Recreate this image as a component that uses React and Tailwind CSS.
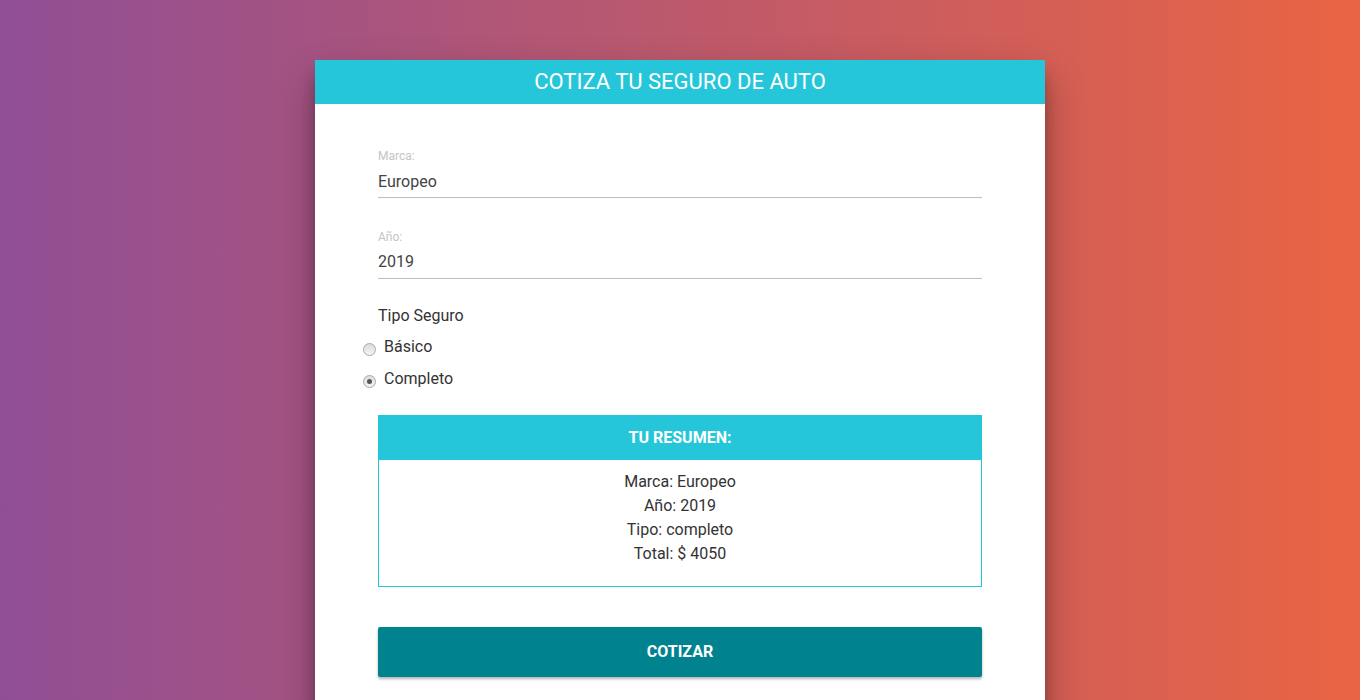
import { useState } from 'react'

export default function App() {
  const [marca] = useState('Europeo')
  const [year] = useState('2019')
  const [plan, setPlan] = useState('completo')

  return (
    <main className="min-h-screen h-[700px] overflow-hidden bg-[linear-gradient(to_right,#904e95,#e96443)] font-['Roboto',sans-serif]">
      <div className="pt-[60px]">
        <div className="mx-auto w-[730px] h-[700px] bg-white shadow-[0_19px_38px_rgba(0,0,0,0.30),0_15px_12px_rgba(0,0,0,0.22)]">
          {/* Header */}
          <header className="h-[44px] bg-[#26c6da] flex items-center justify-center">
            <h1 className="text-[22px] text-white uppercase leading-none">Cotiza tu seguro de auto</h1>
          </header>

          {/* Form */}
          <div className="px-[63px] pt-[44px]">
            <div>
              <label className="block h-4 text-[12px] leading-4 text-[#c4c4c4]">Marca:</label>
              <div className="mt-[2px] h-[32px] flex items-center border-b border-[#bdbdbd] text-[16px] text-[#444]">
                {marca}
              </div>
            </div>

            <div className="mt-[31px]">
              <label className="block h-4 text-[12px] leading-4 text-[#c4c4c4]">Año:</label>
              <div className="mt-[1px] h-[33px] flex items-center border-b border-[#bdbdbd] text-[16px] text-[#444]">
                {year}
              </div>
            </div>

            <p className="mt-[25px] text-[16px] leading-6 text-[#333]">Tipo Seguro</p>

            <div className="mt-[3px]">
              {[
                { value: 'basico', label: 'Básico' },
                { value: 'completo', label: 'Completo' },
              ].map((opt) => (
                <label
                  key={opt.value}
                  onClick={() => setPlan(opt.value)}
                  className="-ml-[15px] h-8 flex items-center gap-[8px] cursor-pointer text-[16px] text-[#333]"
                >
                  <span className="w-[13px] h-[13px] rounded-full border border-[#a9a9a9] bg-[linear-gradient(#dcdcdc,#f4f4f4)] flex items-center justify-center mt-[4px]">
                    {plan === opt.value && <span className="w-[5px] h-[5px] rounded-full bg-[#555]" />}
                  </span>
                  {opt.label}
                </label>
              ))}
            </div>

            {/* Resumen */}
            <div className="mt-[20px] border border-[#26c6da]">
              <div className="h-[44px] bg-[#26c6da] flex items-center justify-center text-white font-bold text-[16px]">
                TU RESUMEN:
              </div>
              <div className="pt-[10px] pb-[20px] text-center text-[16px] leading-6 text-[#333]">
                <p>Marca: {marca}</p>
                <p>Año: {year}</p>
                <p>Tipo: {plan}</p>
                <p>Total: $ 4050</p>
              </div>
            </div>

            <button className="mt-[40px] w-full h-[50px] rounded-[2px] bg-[#00838f] text-white font-bold text-[16px] shadow-[0_2px_3px_rgba(0,0,0,0.3)]">
              COTIZAR
            </button>
          </div>
        </div>
      </div>
    </main>
  )
}
